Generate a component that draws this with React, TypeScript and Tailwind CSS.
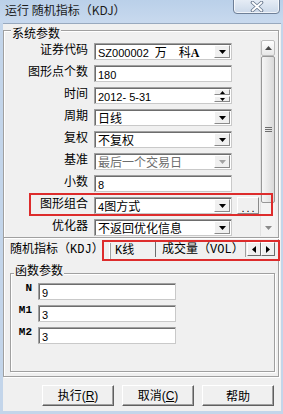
import React from "react";

const latin = "font-['Liberation_Sans',sans-serif] text-[11px]";
const mono = "font-['Liberation_Mono',monospace] text-[12px]";
const monoS = "font-['Liberation_Mono',monospace] text-[11px]";

function Tri({ dir, color = "#000", w = 7, h = 4 }: { dir: "up" | "down" | "left" | "right"; color?: string; w?: number; h?: number }) {
  let pts = "";
  if (dir === "down") pts = `0,0 ${w},0 ${w / 2},${h}`;
  if (dir === "up") pts = `0,${h} ${w},${h} ${w / 2},0`;
  if (dir === "left") pts = `${w},0 ${w},${h} 0,${h / 2}`;
  if (dir === "right") pts = `0,0 0,${h} ${w},${h / 2}`;
  return (
    <svg width={w} height={h} viewBox={`0 0 ${w} ${h}`} className="block">
      <polygon points={pts} fill={color} />
    </svg>
  );
}

function Box({ children, className = "", bg = "bg-white" }: { children?: React.ReactNode; className?: string; bg?: string }) {
  return (
    <div
      className={`h-[17px] w-[138px] border border-[#a0a0a0] border-r-[#c9c9c9] border-b-[#c9c9c9] ${bg} shadow-[inset_1px_1px_0_#6d6d6d] flex ${className}`}
    >
      {children}
    </div>
  );
}

function Txt({ children, gray }: { children: React.ReactNode; gray?: boolean }) {
  return (
    <div className={`flex-1 pl-[3px] pt-[2px] leading-[12px] whitespace-pre overflow-hidden ${gray ? "text-[#6d6d6d]" : "text-black"}`}>
      {children}
    </div>
  );
}

function DropBtn({ disabled }: { disabled?: boolean }) {
  return (
    <div className="w-[16px] my-[1px] mr-[1px] bg-[#f0f0f0] border border-t-white border-l-white border-r-[#8a8a8a] border-b-[#8a8a8a] flex items-center justify-center">
      <Tri dir="down" color={disabled ? "#a3a3a3" : "#000"} />
    </div>
  );
}

function Combo({ children, disabled }: { children: React.ReactNode; disabled?: boolean }) {
  return (
    <Box>
      <Txt gray={disabled}>{children}</Txt>
      <DropBtn disabled={disabled} />
    </Box>
  );
}

function Row({ label, children }: { label: string; children: React.ReactNode }) {
  return (
    <div className="flex h-[17px] mb-[5px]">
      <div className="w-[84px] text-right leading-[12px] whitespace-nowrap">{label}</div>
      <div className="ml-[6px] flex">{children}</div>
    </div>
  );
}

function Raised({ children, className = "" }: { children?: React.ReactNode; className?: string }) {
  return (
    <div
      className={`bg-[#f0f0f0] border border-t-white border-l-white border-r-[#5f5f5f] border-b-[#5f5f5f] shadow-[inset_-1px_-1px_0_#a0a0a0] flex items-center justify-center ${className}`}
    >
      {children}
    </div>
  );
}

function Legend({ children, className = "" }: { children: React.ReactNode; className?: string }) {
  return <div className={`absolute px-[1px] bg-[#f0f0f0] leading-[12px] whitespace-nowrap ${className}`}>{children}</div>;
}

function ParamRow({ label, value }: { label: string; value: string }) {
  return (
    <div className="flex h-[17px] mb-[5px]">
      <div className={`w-[21px] text-right leading-[11px] font-bold ${monoS}`}>{label}</div>
      <div className="ml-[6px]">
        <Box>
          <Txt>
            <span className={latin}>{value}</span>
          </Txt>
        </Box>
      </div>
    </div>
  );
}

export default function App() {
  return (
    <div className="relative w-[283px] h-[414px] overflow-hidden bg-[#c3d5ea] flex flex-col font-['Noto_Sans_CJK_SC',sans-serif] text-[12px] text-black leading-none select-none">
      {/* title bar */}
      <div className="h-[23px] flex items-start justify-between bg-gradient-to-b from-[#bad0e9] to-[#c8d9ee]">
        <div className="pl-[5px] pt-[4px] leading-[12px] text-[#1b1b1b] whitespace-nowrap">运行 随机指标（KDJ）</div>
        <div className="mr-[3px] -mt-[5px] w-[47px] h-[19px] rounded-b-[4px] border border-[#6e7f97] bg-gradient-to-b from-[#eef3f9] to-[#cbd8e9] shadow-[inset_0_0_0_1px_rgba(255,255,255,0.7)] flex items-center justify-center">
          <svg width="14" height="11" viewBox="0 0 14 11" className="block mt-[4px]">
            <path d="M2.5 1.5 L11.5 9.5 M11.5 1.5 L2.5 9.5" stroke="#6a7a90" strokeWidth="3.6" strokeLinecap="round" fill="none" />
            <path d="M2.5 1.5 L11.5 9.5 M11.5 1.5 L2.5 9.5" stroke="#ffffff" strokeWidth="1.8" strokeLinecap="round" fill="none" />
          </svg>
        </div>
      </div>

      {/* client area */}
      <div className="ml-[3px] mr-[2px] h-[388px] bg-[#f0f0f0] border-t border-[#98a9be] flex flex-col">
        {/* 系统参数 group */}
        <div className="relative mt-[6px] w-[276px] h-[208px] border border-[#a0a0a0] shadow-[inset_1px_1px_0_#fff,1px_1px_0_#fff] flex">
          <Legend className="left-[7px] -top-[4px]">系统参数</Legend>
          <div className="w-[256px] pt-[12px] flex flex-col">
            <Row label="证券代码">
              <Combo>
                <span className={latin}>SZ000002</span>
                <span className="ml-[6px]">万</span>
                <span className="ml-[12px]">科</span>
                <span className="font-['Liberation_Serif',serif] font-bold text-[12px]">A</span>
              </Combo>
            </Row>
            <Row label="图形点个数">
              <Box>
                <Txt>
                  <span className={latin}>180</span>
                </Txt>
              </Box>
            </Row>
            <Row label="时间">
              <Box>
                <Txt>
                  <span className={`${latin} text-[11.5px]`}>2012- 5-31</span>
                </Txt>
                <div className="w-[16px] my-[1px] mr-[1px] flex flex-col gap-[1px]">
                  <Raised className="h-[6px] border-r-[#8a8a8a] border-b-[#8a8a8a] shadow-none">
                    <Tri dir="up" w={5} h={3} />
                  </Raised>
                  <Raised className="h-[6px] border-r-[#8a8a8a] border-b-[#8a8a8a] shadow-none">
                    <Tri dir="down" w={5} h={3} />
                  </Raised>
                </div>
              </Box>
            </Row>
            <Row label="周期">
              <Combo>日线</Combo>
            </Row>
            <Row label="复权">
              <Combo>不复权</Combo>
            </Row>
            <Row label="基准">
              <Combo disabled>最后一个交易日</Combo>
            </Row>
            <Row label="小数">
              <Box>
                <Txt>
                  <span className={latin}>8</span>
                </Txt>
              </Box>
            </Row>
            <Row label="图形组合">
              <Combo>
                <span className={latin}>4</span>图方式
              </Combo>
              <Raised className="ml-[5px] w-[22px] h-[17px] items-end pb-[3px] border-r-[#8a8a8a] border-b-[#8a8a8a] shadow-none">
                <span className={`${latin} tracking-[2px] leading-[4px] pl-[2px]`}>...</span>
              </Raised>
            </Row>
            <Row label="优化器">
              <Combo>不返回优化信息</Combo>
            </Row>
          </div>
          {/* vertical scrollbar */}
          <div className="w-[15px] h-[196px] mt-[9px] mr-[3px] flex flex-col bg-[#f3f3f3] border-l border-[#e2e2e2]">
            <div className="h-[16px] border border-[#bdbdbd] rounded-[2px] bg-gradient-to-b from-white to-[#e7e7e7] flex items-center justify-center">
              <Tri dir="up" color="#4a4a4a" w={7} h={4} />
            </div>
            <div className="h-[147px] border border-[#979797] rounded-[2px] bg-gradient-to-r from-[#f6f6f6] to-[#dadada] flex flex-col items-center justify-center gap-[1px]">
              <div className="w-[7px] h-[1px] bg-[#6e6e6e]" />
              <div className="w-[7px] h-[1px] bg-[#6e6e6e]" />
              <div className="w-[7px] h-[1px] bg-[#6e6e6e]" />
            </div>
            <div className="flex-1" />
            <div className="h-[16px] flex items-center justify-center">
              <Tri dir="down" color="#8a8a8a" w={7} h={4} />
            </div>
          </div>
        </div>

        {/* lower panel */}
        <div className="w-[276px] h-[139px] border-l border-r border-b border-[#a0a0a0] shadow-[inset_1px_0_0_#fff,1px_1px_0_#fff] flex flex-col">
          <div className="flex h-[22px] items-start">
            <div className="ml-[6px] mt-[4px] w-[92px] leading-[12px] whitespace-nowrap">
              随机指标（<span className={mono}>KDJ</span>）
            </div>
            <div className="flex h-[20px] mt-[2px] items-stretch">
              <div className="w-[7px]" />
              <div className="w-[46px] mt-[3px] mb-[1px] border-l border-white shadow-[inset_1px_0_0_#a0a0a0] pl-[5px] leading-[12px] whitespace-nowrap">
                <span className={mono}>K</span>线
              </div>
              <div className="w-[1px] mt-[2px] mb-[3px] bg-[#6d6d6d]" />
              <div className="w-[89px] pl-[6px] pt-[2px] leading-[12px] whitespace-nowrap">
                成交量（<span className={mono}>VOL</span>）
              </div>
              <div className="w-[1px] mt-[2px] mb-[3px] bg-[#a0a0a0]" />
              <Raised className="ml-[1px] mt-[2px] w-[14px] h-[14px] border-r-[#6d6d6d] border-b-[#6d6d6d] shadow-none">
                <Tri dir="left" w={4} h={7} />
              </Raised>
              <Raised className="mt-[2px] w-[14px] h-[14px] border-r-[#6d6d6d] border-b-[#6d6d6d] shadow-none">
                <Tri dir="right" w={4} h={7} />
              </Raised>
            </div>
          </div>

          {/* 函数参数 group */}
          <div className="relative ml-[6px] mt-[13px] w-[265px] h-[99px] border border-[#a0a0a0] shadow-[inset_1px_1px_0_#fff,1px_1px_0_#fff] pt-[9px] flex flex-col">
            <Legend className="left-[3px] -top-[10px]">函数参数</Legend>
            <ParamRow label="N" value="9" />
            <ParamRow label="M1" value="3" />
            <ParamRow label="M2" value="3" />
          </div>
        </div>

        {/* buttons */}
        <div className="mt-[8px] pl-[39px] flex gap-[8px]">
          <Raised className="w-[72px] h-[21px]">
            <span className="leading-[12px] whitespace-nowrap">
              执行<span className={`${latin} text-[12px]`}>(<u>R</u>)</span>
            </span>
          </Raised>
          <Raised className="w-[72px] h-[21px]">
            <span className="leading-[12px] whitespace-nowrap">
              取消<span className={`${latin} text-[12px]`}>(<u>C</u>)</span>
            </span>
          </Raised>
          <Raised className="w-[72px] h-[21px]">
            <span className="leading-[12px] whitespace-nowrap">帮助</span>
          </Raised>
        </div>
      </div>

      {/* red annotation boxes */}
      <div className="absolute left-[29px] top-[193px] w-[244px] h-[23px] border-2 border-[#dd2c2c] pointer-events-none" />
      <div className="absolute left-[102px] top-[240px] w-[178px] h-[21px] border-2 border-[#dd2c2c] pointer-events-none" />
    </div>
  );
}
